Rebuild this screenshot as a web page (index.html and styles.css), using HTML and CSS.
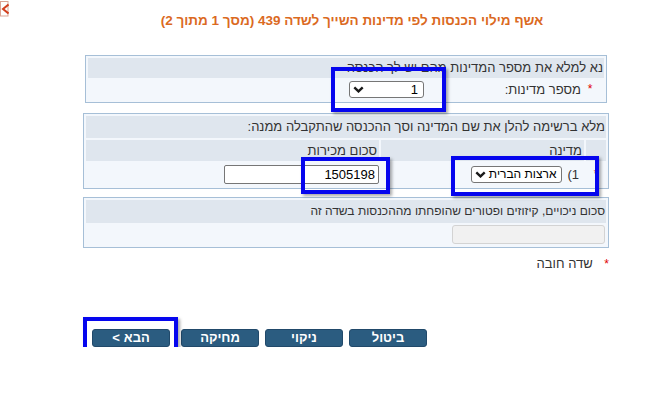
FILE: index.html
```html
<!DOCTYPE html>
<html lang="he">
<head>
    <meta charset="UTF-8">
    <title>אשף מילוי הכנסות</title>
    <link rel="stylesheet" href="styles.css">
</head>
<body>

    <!-- אייקון תמונה שבורה -->
    <svg class="broken" width="9" height="17" viewBox="0 0 9 17">
        <rect x="0.5" y="1.5" width="7.5" height="14.5" fill="#fff" stroke="#d9a595"/>
        <path d="M8.5 4.5 L3 9 L8.5 13.5" fill="none" stroke="#d2401f" stroke-width="2"/>
    </svg>

    <div class="wizard">
        <h1 class="title">אשף מילוי הכנסות לפי מדינות השייך לשדה 439 (מסך 1 מתוך 2)</h1>

        <div class="panel panel-count">
            <div class="panel-head">נא למלא את מספר המדינות מהם יש לך הכנסה</div>
            <div class="count-row">
                <span class="req">*</span>
                <label class="count-label">מספר מדינות:</label>
                <span class="mark mark-count">
                    <span class="sel sel-count">
                        <span class="sel-text">1</span>
                        <svg class="chev" width="11" height="7" viewBox="0 0 11 7"><path d="M1.3 1.4 L5.5 5.4 L9.7 1.4" fill="none" stroke="#1a1a1a" stroke-width="2.4"/></svg>
                    </span>
                </span>
            </div>
        </div>

        <div class="panel panel-list">
            <div class="panel-head head-tall">מלא ברשימה להלן את שם המדינה וסך ההכנסה שהתקבלה ממנה:</div>
            <div class="grid">
                <div class="grid-th"></div>
                <div class="grid-th">מדינה</div>
                <div class="grid-th">סכום מכירות</div>

                <div class="grid-td td-num"><span class="req">*</span></div>
                <div class="grid-td td-country">
                    <span class="mark mark-country">
                        <span class="row-no">1)</span>
                        <span class="sel sel-country">
                            <span class="sel-text">ארצות הברית</span>
                            <svg class="chev" width="11" height="7" viewBox="0 0 11 7"><path d="M1.3 1.4 L5.5 5.4 L9.7 1.4" fill="none" stroke="#1a1a1a" stroke-width="2.4"/></svg>
                        </span>
                    </span>
                </div>
                <div class="grid-td td-sum">
                    <span class="mark mark-sum">
                        <input class="inp inp-sum" type="text" value="1505198">
                    </span>
                </div>
            </div>
        </div>

        <div class="panel panel-deduct">
            <div class="panel-head head-deduct">סכום ניכויים, קיזוזים ופטורים שהופחתו מההכנסות בשדה זה</div>
            <div class="deduct-row">
                <input class="inp inp-off" type="text" disabled>
            </div>
        </div>

        <div class="note"><span class="req">*</span> שדה חובה</div>

        <div class="actions">
            <button class="btn">ביטול</button>
            <button class="btn">ניקוי</button>
            <button class="btn">מחיקה</button>
            <span class="mark mark-next">
                <button class="btn btn-next"><span>&lt;</span><span>הבא</span></button>
            </span>
        </div>
    </div>

</body>
</html>
```

FILE: styles.css
```css
body {
    margin: 0;
    font-family: "Liberation Sans", Arial, sans-serif;
    background: #fff;
    color: #333;
}

.broken {
    float: left;
    display: block;
}

.wizard {
    direction: rtl;
    width: 526px;
    margin-left: 83px;
    padding-top: 13px;
}

.title {
    margin: 0 0 26px;
    padding-left: 12px;
    text-align: center;
    font-size: 13.5px;
    line-height: 16px;
    font-weight: bold;
    color: #db6a1f;
}

.req {
    color: #e00000;
    font-size: 12px;
}

/* תיבות */
.panel {
    border: 1px solid #a6bfd7;
    background: #f3f7fc;
    padding: 2px;
}

.panel-head {
    background: #dfe6ee;
    height: 20px;
    line-height: 20px;
    padding-right: 1px;
    font-size: 13px;
    color: #333;
    white-space: nowrap;
}

.panel-count {
    margin: 0 2px;
}

.count-row {
    display: flex;
    align-items: center;
    height: 22px;
}

.count-row .req {
    width: 8px;
    margin-right: 10px;
    text-align: center;
}

.count-label {
    width: 157px;
    margin-right: 5px;
    font-size: 13px;
}

.panel-list {
    margin-top: 10px;
    padding-bottom: 1px;
}

.head-tall {
    height: 22px;
    line-height: 22px;
}

.grid {
    display: grid;
    grid-template-columns: 20px 203px 1fr;
    column-gap: 2px;
    margin-top: 2px;
}

.grid-th {
    background: #dfe6ee;
    height: 21px;
    line-height: 21px;
    padding-right: 2px;
    font-size: 13px;
}

.grid-td {
    height: 26px;
    display: flex;
    align-items: center;
}

.td-num {
    justify-content: center;
}

.td-country {
    padding-right: 5px;
}

.row-no {
    font-size: 13px;
    margin-left: 5px;
}

.panel-deduct {
    margin-top: 8px;
}

.head-deduct {
    height: 23px;
    line-height: 23px;
    font-size: 12px;
}

.deduct-row {
    height: 22px;
    display: flex;
    align-items: center;
}

/* שדות */
.sel {
    box-sizing: border-box;
    display: inline-flex;
    align-items: center;
    height: 17px;
    padding: 0 5px 0 3px;
    border: 1px solid #767676;
    border-radius: 3px;
    background: #fff;
    color: #000;
    font-size: 13px;
    white-space: nowrap;
}

.chev {
    display: block;
    flex: none;
    margin-right: auto;
}

.sel-count {
    width: 75px;
}

.sel-country {
    width: 91px;
    font-size: 12px;
}

.inp {
    box-sizing: border-box;
    font-family: "Liberation Sans", Arial, sans-serif;
    font-size: 13px;
    height: 19px;
    padding: 0 3px;
    border: 1px solid #767676;
    border-radius: 2px;
    color: #000;
}

.inp-sum {
    width: 155px;
    display: block;
}

.inp-off {
    width: 153px;
    margin-right: 1px;
    background: #f1f1f1;
    border-color: #d3d3d3;
    border-radius: 3px;
}

.note {
    margin-top: 8px;
    font-size: 13px;
    line-height: 15px;
}

.note .req {
    margin-left: 8px;
}

/* כפתורים */
.actions {
    display: flex;
    gap: 6px;
    margin-top: 57px;
    padding-right: 182px;
}

.btn {
    width: 78px;
    height: 18px;
    padding: 0;
    border: 1px solid #21496a;
    border-radius: 3px;
    background: #2b5c80;
    color: #fff;
    font-family: "Liberation Sans", Arial, sans-serif;
    font-size: 13px;
    font-weight: bold;
    line-height: 16px;
    display: block;
}

.btn-next {
    display: flex;
    direction: ltr;
    justify-content: center;
    align-items: center;
    gap: 4px;
}

.mark-next {
    margin-right: 5px;
}

/* סימוני הדגשה כחולים */
.mark {
    position: relative;
    display: inline-flex;
    align-items: center;
}

.mark::after {
    content: "";
    position: absolute;
    border: 4px solid #0606ee;
    box-shadow: 2px 2px 3px rgba(0, 0, 0, 0.35);
    pointer-events: none;
}

.mark-count::after {
    top: -14px;
    right: -22px;
    bottom: -14px;
    left: -18px;
}

.mark-country::after {
    top: -10px;
    right: -20px;
    bottom: -13px;
    left: -20px;
}

.mark-sum::after {
    top: -8px;
    right: -11px;
    bottom: -10px;
    left: 77px;
}

.mark-next::after {
    top: -12px;
    right: -8px;
    bottom: -12px;
    left: -9px;
}
```
